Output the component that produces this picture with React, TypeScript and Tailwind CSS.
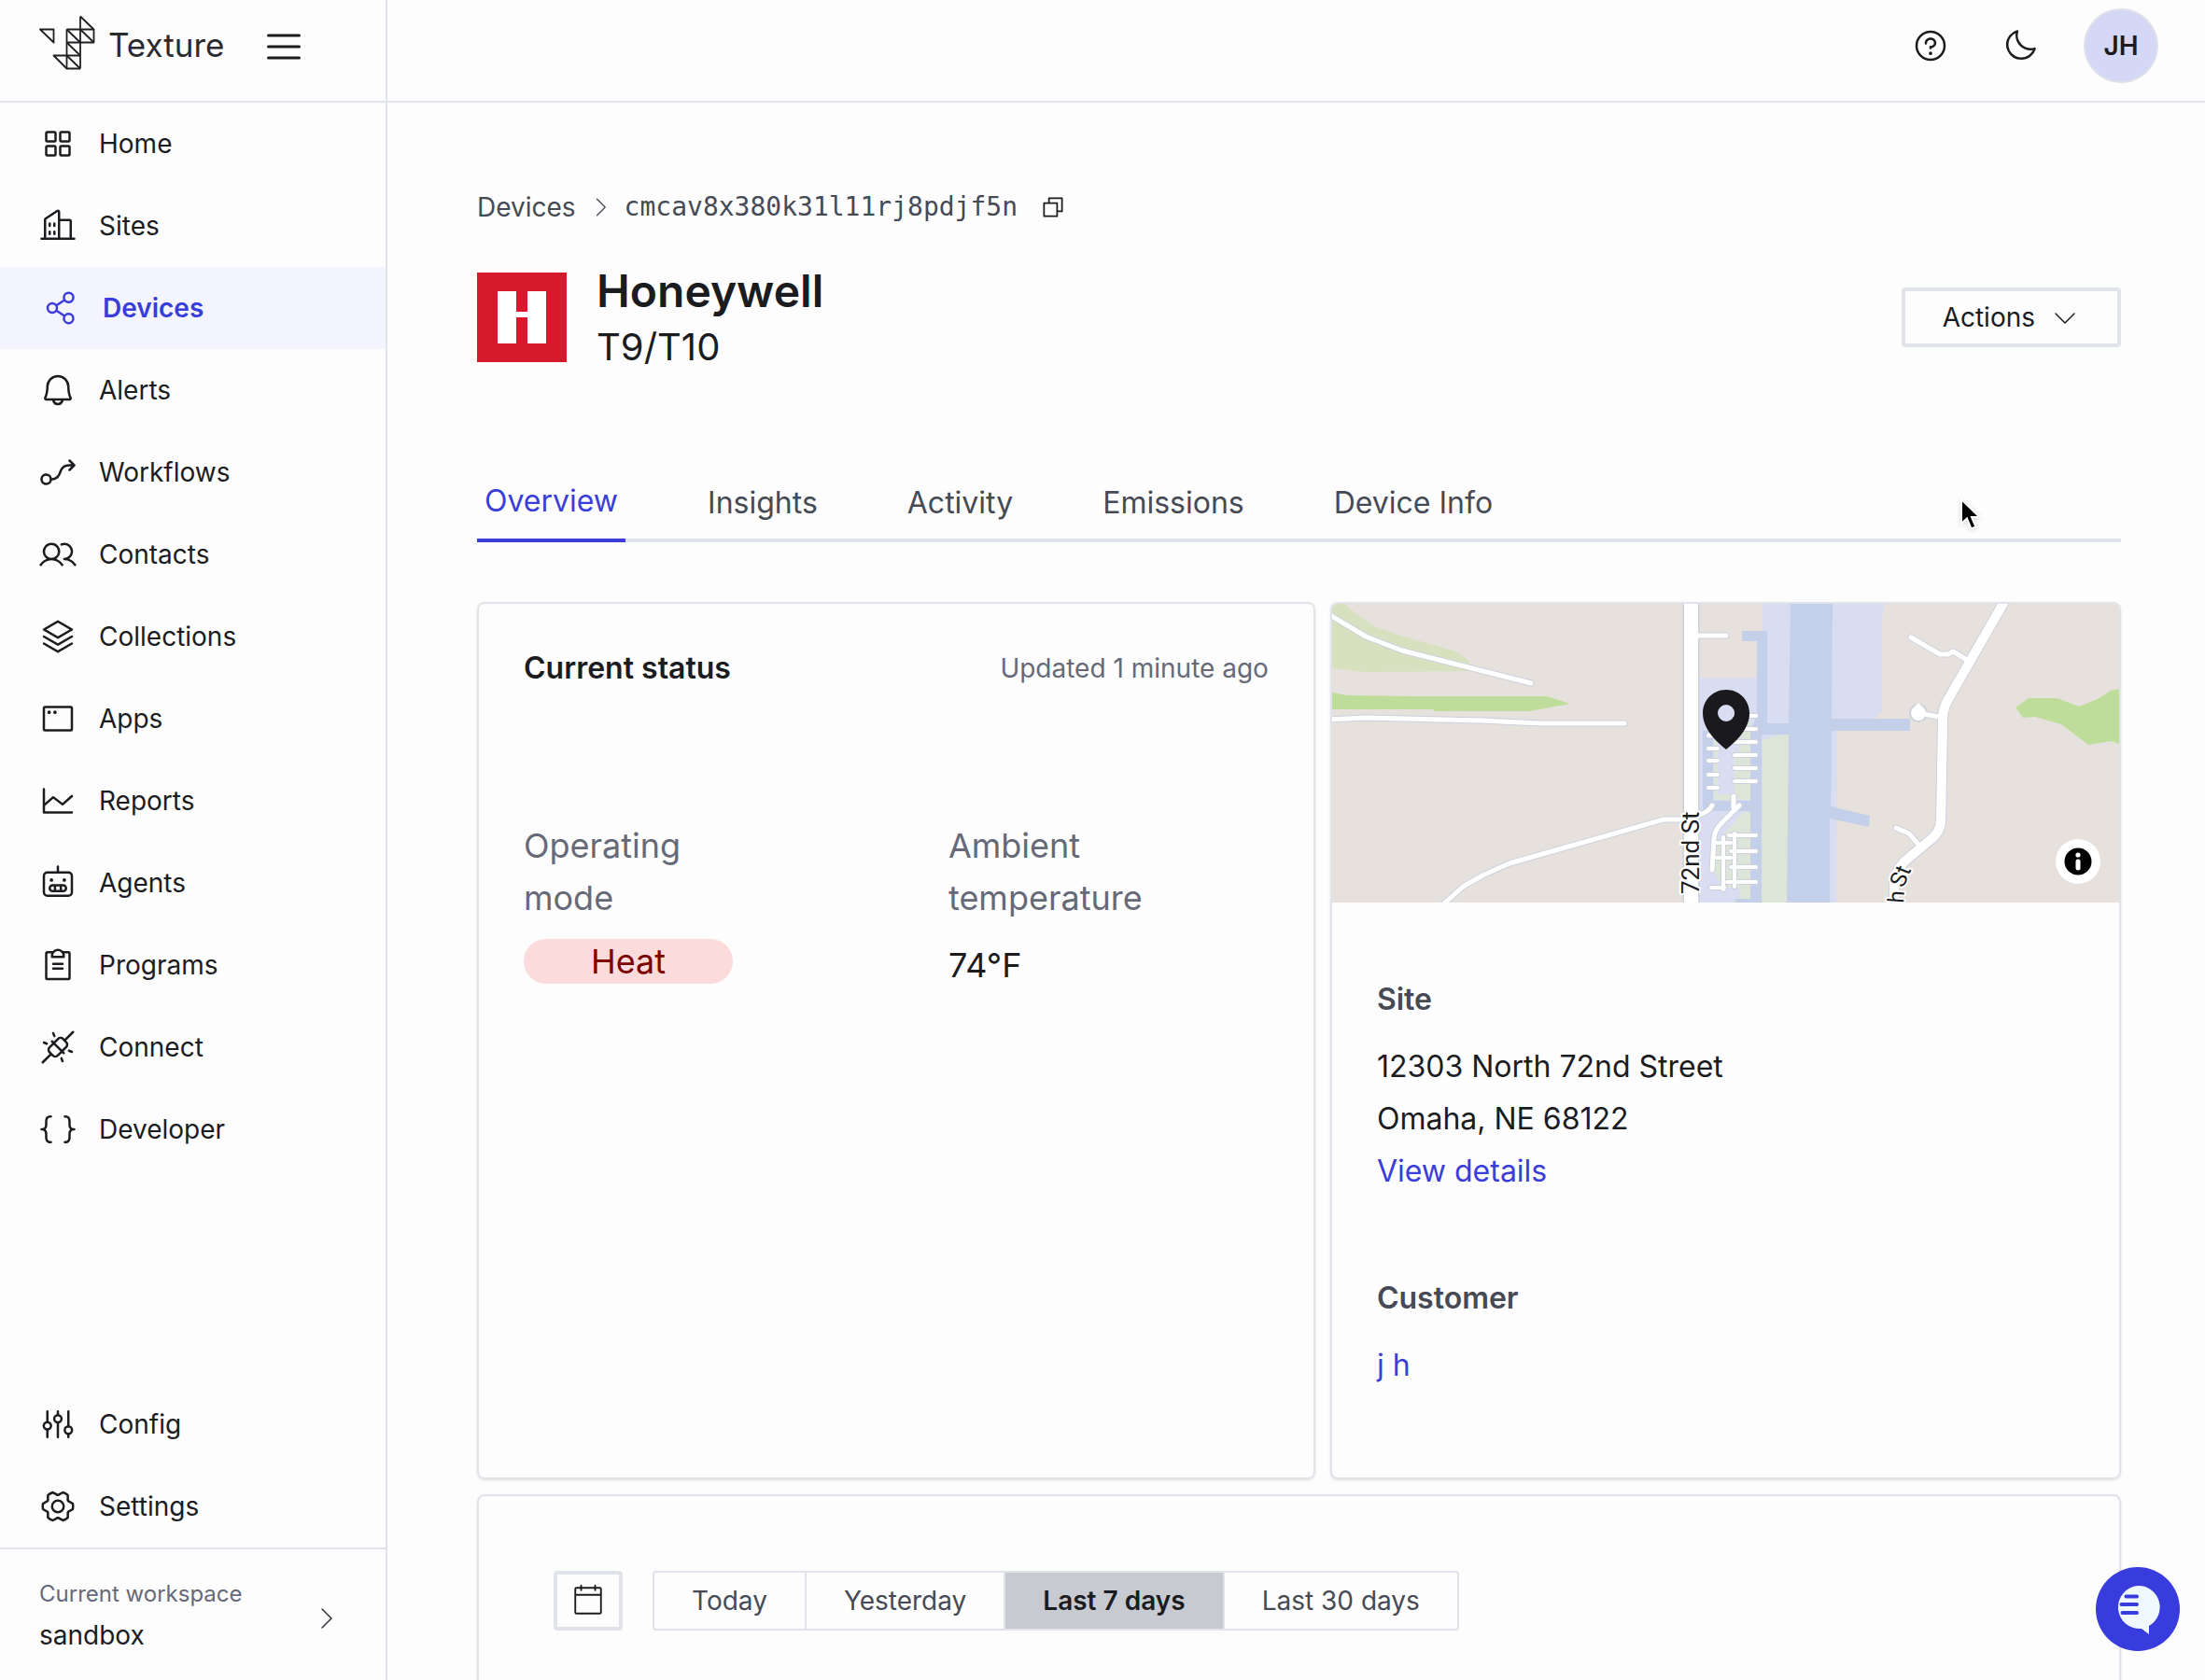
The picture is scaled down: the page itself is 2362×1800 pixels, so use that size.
import type { ComponentType, ReactNode } from 'react'
import {
  PiAppWindow,
  PiBell,
  PiBracketsCurly,
  PiBuildings,
  PiCalendarBlankLight,
  PiCaretDownLight,
  PiCaretRightLight,
  PiChartLine,
  PiClipboardText,
  PiCopy,
  PiFlowArrow,
  PiGearSix,
  PiList,
  PiMoon,
  PiPlugsConnected,
  PiQuestion,
  PiRobot,
  PiShareNetwork,
  PiSquaresFour,
  PiStack,
  PiUsers,
} from 'react-icons/pi'

interface NavEntry {
  label: string
  icon: ComponentType<{ className?: string }>
  active?: boolean
}

function SlidersIcon({ className }: { className?: string }) {
  return (
    <svg viewBox="0 0 256 256" className={className} fill="none" stroke="currentColor" strokeWidth="16" strokeLinecap="round">
      <path d="M56 40V112M56 164V216M128 40V64M128 116V216M200 40V142M200 194V216" />
      <circle cx="56" cy="138" r="25" />
      <circle cx="128" cy="90" r="25" />
      <circle cx="200" cy="168" r="25" />
    </svg>
  )
}

const mainNav: NavEntry[] = [
  { label: 'Home', icon: PiSquaresFour },
  { label: 'Sites', icon: PiBuildings },
  { label: 'Devices', icon: PiShareNetwork, active: true },
  { label: 'Alerts', icon: PiBell },
  { label: 'Workflows', icon: PiFlowArrow },
  { label: 'Contacts', icon: PiUsers },
  { label: 'Collections', icon: PiStack },
  { label: 'Apps', icon: PiAppWindow },
  { label: 'Reports', icon: PiChartLine },
  { label: 'Agents', icon: PiRobot },
  { label: 'Programs', icon: PiClipboardText },
  { label: 'Connect', icon: PiPlugsConnected },
  { label: 'Developer', icon: PiBracketsCurly },
]

const footerNav: NavEntry[] = [
  { label: 'Config', icon: SlidersIcon },
  { label: 'Settings', icon: PiGearSix },
]

const tabs = ['Overview', 'Insights', 'Activity', 'Emissions', 'Device Info']
const ranges = ['Today', 'Yesterday', 'Last 7 days', 'Last 30 days']

function NavItem({ label, icon: Icon, active }: NavEntry) {
  return (
    <a
      href="#"
      aria-current={active ? 'page' : undefined}
      className={
        active
          ? 'flex h-22 items-center gap-6 bg-[#f3f4fd] pl-[46px] text-[28px] font-semibold text-[#3a3dd9]'
          : 'flex h-22 items-center gap-6 pl-[42px] text-[28px] text-[#1b1c1f]'
      }
    >
      <Icon className="size-10 shrink-0" />
      {label}
    </a>
  )
}

function TextureMark() {
  return (
    <svg viewBox="0 0 60 60" className="size-15 shrink-0" fill="none" stroke="#1f2023" strokeWidth="1.8" strokeLinejoin="round">
      <path d="M1 15.500H15.500V29.500Z" />
      <path d="M44 1.500V57.500M44 1.500L58.500 15.500V29.500H29.500M29.500 15.500H58.500M29.500 15.500V57.500H44" />
      <path d="M44 15.500L58.500 29.500M29.500 15.500L44 29.500M29.500 29.500L44 43.500M29.500 43.500L44 57.500" />
      <path d="M44 43.500H15.500L29.500 57.500" />
    </svg>
  )
}

function Sidebar() {
  return (
    <aside className="flex w-[415px] shrink-0 flex-col border-r-2 border-[#e0e3e9]">
      <div className="flex h-[110px] shrink-0 items-center border-b-2 border-[#e0e3e9] pb-2 pl-[42px]">
        <a href="#" className="flex items-center gap-[14px] pb-2">
          <TextureMark />
          <span className="pt-1 text-[35px] leading-10 text-[#2a2b2e]">Texture</span>
        </a>
        <button type="button" aria-label="Toggle menu" className="ml-10">
          <PiList className="size-12" />
        </button>
      </div>
      <nav className="flex flex-1 flex-col">
        {mainNav.map((n) => (
          <NavItem key={n.label} {...n} />
        ))}
        <div className="flex-1" />
        {footerNav.map((n) => (
          <NavItem key={n.label} {...n} />
        ))}
      </nav>
      <button
        type="button"
        className="flex items-center justify-between border-t-2 border-[#e0e3e9] pt-[30px] pr-12 pb-[22px] pl-[42px] text-left"
      >
        <span>
          <span className="block text-2xl leading-9 text-[#666978]">Current workspace</span>
          <span className="block text-[28px] leading-13">sandbox</span>
        </span>
        <PiCaretRightLight className="size-8 text-[#33353c]" />
      </button>
    </aside>
  )
}

function Header() {
  return (
    <header className="flex h-[110px] shrink-0 items-center justify-end border-b-2 border-[#e0e3e9] pr-[50px] pb-[10px]">
      <button type="button" aria-label="Help" className="mr-14">
        <PiQuestion className="size-10" />
      </button>
      <button type="button" aria-label="Dark mode" className="mr-12">
        <PiMoon className="size-10" />
      </button>
      <button
        type="button"
        className="size-20 rounded-full border-2 border-[#dfe1e8] bg-[#d4d7f6] text-[28px] font-semibold"
      >
        JH
      </button>
    </header>
  )
}

function HoneywellLogo() {
  return (
    <svg viewBox="0 0 96 96" className="size-24 shrink-0" role="img" aria-label="Honeywell logo">
      <rect width="96" height="96" fill="#d6192c" />
      <path d="M22 20H42V42H54V20H74V76H54V48H42V76H22Z" fill="#fff" />
    </svg>
  )
}

function Card({ children, className = '' }: { children: ReactNode; className?: string }) {
  return (
    <section className={`overflow-hidden rounded-lg border-2 border-[#e0e3e9] shadow-sm ${className}`}>
      {children}
    </section>
  )
}

// Street geometry is drawn twice: a wider casing first, the white fill on top
const lanes = [
  'M-4 11L36 35L75 50L213 85',
  'M-4 124L36 122L160 125L223 128H313',
  'M112 328L140 303L163 290L190 278L355 231H380',
  'M392 34H422',
  'M620 36L651 54H660L665 51L680 60',
  'M628 117L650 121',
  'M604 240L618 246L630 260',
  'M392 226Q403 224 407 216',
  'M430 206V218',
  'M436 216L417 235Q409 243 409 252L407 285',
]
const stubs = [
  'M403 141H413M403 155H413M403 168H413M403 183H413M403 197H413',
  'M431 120H454M431 134H454M431 148H454M431 162H454M431 176H454M431 190H454',
  'M425 248H454M427 265H454M427 282H454M423 298H454M409 256H427M409 272H427M406 304H420',
  'M431 246V303M419 250V306',
]
const mainRoad = 'M722 -6L660 102Q654 112 654 124L652 233Q651 244 643 251L614 275Q603 286 602 300V326'

function SiteMap() {
  return (
    <div className="relative">
      <svg viewBox="0 0 843 320" preserveAspectRatio="xMidYMid slice" className="block h-80 w-full" role="img" aria-label="Site map">
        <rect width="843" height="320" fill="#e6e1dd" />
        <path d="M0 0H14L26 11L45 24L73 34L133 51L147 61L145 72L36 73L0 69Z" fill="#d8e1bf" />
        <path d="M0 95L16 98L85 99H230L255 107L211 115H110L108 113H0Z" fill="#bedd9a" />
        <path d="M732 111L746 101H776L800 110L820 102L834 93L843 91V150L835 147L810 151L781 129L753 121L740 122Z" fill="#bedd9a" />

        {/* airfield */}
        <path d="M393 79H455V30H461V0H591L589 17V115L581 123H541L540 320H393Z" fill="#d8ddf2" />
        <path d="M397 136H408V211H448V222H397Z" fill="#c4cfe9" />
        <path d="M439 29H466V128H491V140H460V320H448V316H432V320H448V136L455 120V40H439Z" fill="#c4cfe9" />
        <path d="M491 0H536L535 123H619V136H535L534 217L576 227L575 239L533 230V320H486Z" fill="#c4cfe9" />
        <path d="M461 146L476 141L489 140L487 320H460Z" fill="#dce5d7" />
        <path d="M441 126H448V210H409V204H431V160H435Z" fill="#dce5d7" />
        <path d="M409 145H413V206H409Z" fill="#dce5d7" />
        <path d="M441 223H448V316H437V304H419L410 290V258L434 230Z" fill="#dce5d7" />

        <g fill="none" strokeLinecap="round" strokeLinejoin="round">
          <path d="M384.500 -10V330" stroke="#cdd1dc" strokeWidth="18" />
          <path d={mainRoad} stroke="#cdd1dc" strokeWidth="12" />
          {lanes.map((d) => (
            <path key={d} d={d} stroke="#cdd1dc" strokeWidth="7" />
          ))}
          {stubs.map((d) => (
            <path key={d} d={d} stroke="#cdd1dc" strokeWidth="6" />
          ))}
          <circle cx="628" cy="117" r="9" fill="#fff" stroke="#cdd1dc" strokeWidth="2" />
          <path d="M384.500 -10V330" stroke="#fff" strokeWidth="15" />
          <path d={mainRoad} stroke="#fff" strokeWidth="10" />
          {lanes.map((d) => (
            <path key={d} d={d} stroke="#fff" strokeWidth="5" />
          ))}
          {stubs.map((d) => (
            <path key={d} d={d} stroke="#fff" strokeWidth="4" />
          ))}
        </g>
        <path d="M622 112L628 106L634 112Z" fill="#fff" />

        <g className="font-['Roboto',sans-serif]" fill="#1b1c1f" stroke="#fff" strokeWidth="4" strokeLinejoin="round" paintOrder="stroke">
          <text transform="translate(393 311) rotate(-90)" fontSize="26">72nd St</text>
          <text transform="translate(612 321) rotate(-86)" fontSize="24">h</text>
          <text transform="translate(612 305) rotate(-68)" fontSize="24">St</text>
        </g>

        <path
          d="M422 92C408 92 397 103 397 117C397 134 411 147 422 156C433 147 447 134 447 117C447 103 436 92 422 92ZM422 108A9 9 0 1 1 422 126A9 9 0 1 1 422 108Z"
          fill="#1a191e"
          fillRule="evenodd"
        />
      </svg>
      <button
        type="button"
        aria-label="Map attribution"
        className="absolute right-5 bottom-5 flex size-12 items-center justify-center rounded-full bg-white"
      >
        <svg viewBox="0 0 30 30" className="size-[30px]">
          <circle cx="15" cy="15" r="14.500" fill="#000" />
          <circle cx="15" cy="8" r="2.600" fill="#fff" />
          <rect x="12.500" y="12.500" width="5" height="12" rx="2.500" fill="#fff" />
        </svg>
      </button>
    </div>
  )
}

function StatusCard() {
  return (
    <Card className="px-12 pt-[45px]">
      <div className="flex items-center justify-between leading-12">
        <h2 className="text-[32px] leading-12 font-semibold">Current status</h2>
        <p className="text-[28px] text-[#666978]">Updated 1 minute ago</p>
      </div>
      <dl className="mt-[138px] grid grid-cols-2 gap-x-28 text-[36px] leading-14">
        <div className="w-56">
          <dt className="text-[#666978]">Operating mode</dt>
          <dd className="mt-4 rounded-full bg-[#fbdbdb] text-center leading-12 text-[#7d0000]">Heat</dd>
        </div>
        <div className="w-56">
          <dt className="text-[#666978]">Ambient temperature</dt>
          <dd className="mt-4">74°F</dd>
        </div>
      </dl>
    </Card>
  )
}

function SiteCard() {
  return (
    <Card>
      <SiteMap />
      <div className="space-y-20 px-12 pt-[76px] pb-[92px] text-[32px] leading-14">
        <div>
          <h2 className="mb-4 font-semibold text-[#464a55]">Site</h2>
          <p>12303 North 72nd Street</p>
          <p>Omaha, NE 68122</p>
          <a href="#" className="block text-[#3a3dd9]">View details</a>
        </div>
        <div>
          <h2 className="mb-4 font-semibold text-[#464a55]">Customer</h2>
          <a href="#" className="block text-[#3a3dd9]">j h</a>
        </div>
      </div>
    </Card>
  )
}

function RangePicker() {
  return (
    <div className="flex gap-8">
      <button
        type="button"
        aria-label="Pick dates"
        className="flex h-16 w-[74px] items-center justify-center rounded-sm border-4 border-[#e0e3e9]"
      >
        <PiCalendarBlankLight className="size-10" />
      </button>
      <div className="flex h-16 divide-x-2 divide-[#e0e3e9] overflow-hidden rounded-sm border-2 border-[#e0e3e9] text-[28px] text-[#464a55]">
        {ranges.map((r) => (
          <button
            key={r}
            type="button"
            className={r === 'Last 7 days' ? 'bg-[#c8cad2] px-10 font-semibold text-[#1b1c1f]' : 'px-10'}
          >
            {r}
          </button>
        ))}
      </div>
    </div>
  )
}

function ChatButton() {
  return (
    <button type="button" aria-label="Open chat" className="fixed right-[27px] bottom-[31px] size-[90px] rounded-full bg-[#383cdc]">
      <svg viewBox="0 0 90 90" className="size-full">
        <path d="M45 20A23 23 0 1 0 49 66L57 72V63A23 23 0 0 0 45 20Z" fill="#f0f8ff" />
        <path d="M32.500 31.500H44M27.500 40H44M28.500 49H44" stroke="#383cdc" strokeWidth="4" strokeLinecap="round" />
      </svg>
    </button>
  )
}

function Pointer() {
  return (
    <svg viewBox="0 0 28 40" className="pointer-events-none absolute top-[532px] left-[2098px] h-10 w-7 drop-shadow-sm">
      <path d="M3 3V29L9 23.500L13.500 34.500L18.500 32.500L14 22H22.500Z" fill="#000" stroke="#fff" strokeWidth="2" />
    </svg>
  )
}

export default function App() {
  return (
    <div className="relative flex h-screen overflow-hidden bg-[#fdfdfd] font-['Inter',sans-serif] text-[#1b1c1f]">
      <Sidebar />
      <div className="flex min-w-0 flex-1 flex-col">
        <Header />
        <main className="flex-1 overflow-hidden pt-[92px] pr-[90px] pl-24">
          <div className="flex h-10 items-center text-[28px] text-[#464a55]">
            <a href="#">Devices</a>
            <PiCaretRightLight className="mx-3 size-7" />
            <span className="font-['DejaVu_Sans_Mono',monospace]">cmcav8x380k31l11rj8pdjf5n</span>
            <button type="button" aria-label="Copy device id" className="ml-6 text-[#1b1c1f]">
              <PiCopy className="size-7" />
            </button>
          </div>

          <div className="mt-[38px] flex items-center">
            <HoneywellLogo />
            <div className="ml-8 flex-1">
              <h1 className="text-5xl leading-16 font-semibold">Honeywell</h1>
              <p className="text-[40px] leading-14">T9/T10</p>
            </div>
            <button
              type="button"
              className="flex h-16 items-center gap-4 rounded-sm border-4 border-[#e0e3e9] px-10 text-[28px]"
            >
              Actions
              <PiCaretDownLight className="size-8" />
            </button>
          </div>

          <div role="tablist" className="mt-28 flex gap-20 border-b-4 border-[#e0e3e9] text-[32px] leading-10">
            {tabs.map((t, i) => (
              <button
                key={t}
                type="button"
                role="tab"
                aria-selected={i === 0}
                className={
                  i === 0
                    ? '-mb-1 border-b-4 border-[#3a3dd9] px-2 pt-[5px] pb-5 text-[#3a3dd9]'
                    : 'px-2 pt-[7px] pb-[18px] text-[#464a55]'
                }
              >
                {t}
              </button>
            ))}
          </div>

          <div className="mt-16 grid grid-cols-[1.06fr_1fr] gap-4">
            <StatusCard />
            <SiteCard />
          </div>

          <Card className="mt-4 min-h-[400px] p-20">
            <RangePicker />
          </Card>
        </main>
      </div>
      <ChatButton />
      <Pointer />
    </div>
  )
}
